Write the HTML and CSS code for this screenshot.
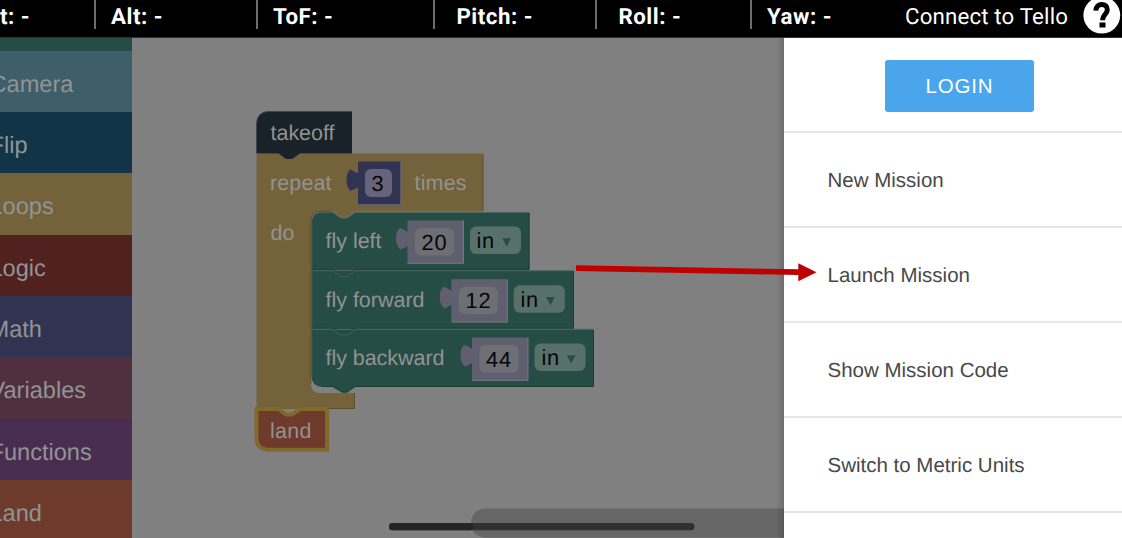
FILE: index.html
```html
<!DOCTYPE html>
<html lang="en">
<head>
<meta charset="utf-8">
<title>Mission editor</title>
<link rel="stylesheet" href="styles.css">
</head>
<body>
<div class="app">
  <header class="topbar">
    <div class="stat stat-bat">t: -</div>
    <div class="stat stat-alt">Alt: -</div>
    <div class="stat stat-tof">ToF: -</div>
    <div class="stat stat-pitch">Pitch: -</div>
    <div class="stat stat-roll">Roll: -</div>
    <div class="stat stat-yaw">Yaw: -</div>
    <div class="connect">Connect to Tello</div>
    <svg class="help" width="38" height="37" viewBox="0 0 38 37">
      <circle cx="18.800" cy="15.200" r="18.400" fill="#fff"/>
      <path d="M12.800 10.600C13 6.500 15.500 4.400 18.800 4.400c3.400 0 5.500 2.200 5.500 5.300 0 4.600-4.800 5-4.800 10.500" fill="none" stroke="#000" stroke-width="5"/>
      <rect x="16.500" y="22.500" width="6" height="5" fill="#000"/>
    </svg>
  </header>
  <main class="main">
    <nav class="toolbox">
      <div class="cat fly"></div>
      <div class="cat camera">Camera</div>
      <div class="cat flip">Flip</div>
      <div class="cat loops">Loops</div>
      <div class="cat logic">Logic</div>
      <div class="cat math">Math</div>
      <div class="cat variables">Variables</div>
      <div class="cat functions">Functions</div>
      <div class="cat landing">Land</div>
    </nav>
    <section class="workspace">
      <svg class="canvas" width="652" height="500" viewBox="132 38 652 500">
        <defs>
          <linearGradient id="edge"><stop offset="0" stop-color="#000" stop-opacity="0"/><stop offset="1" stop-color="#000" stop-opacity=".15"/></linearGradient>
        </defs>
        <path class="loop" d="M256.500 153.500H483V211.500H355L347 217H341L333 211.500H320Q311 212 311 221V384Q311 393 320 393H354.500V409H256.500Z"/>
        <path class="loop-edge" d="M483 154V211M354.500 393V408.500H329M310.800 384V221Q311 211.500 320 211.300H332"/>
        <path class="takeoff" d="M256.500 153.500V124Q257 111.500 269 111.500H352V153.500H300L292 159H286L278.500 153.500Z"/>
        <path class="takeoff-edge" d="M256.500 153V124Q257 111.500 269 111.500H352"/>

        <path class="move" d="M311.500 270.500V222Q312 212.500 321 212.500H333L341 218H347L355 212.500H529.500V270.500Z"/>
        <path class="move" d="M311.500 271H574V329H311.500Z"/>
        <path class="move" d="M311.500 329.500H594V387H355L347 392.500H342L333 387H322Q311.500 386 311.500 376Z"/>
        <path class="move-dark" d="M312 269.700H333L341 275.200H347L355 269.700H529V213M312 328.200H333L341 333.700H347L355 328.200H573.500V271M322 386.500H333L342 392H347L355 386.500H593.500V330"/>
        <path class="move-light" d="M311.700 269V222Q312 212.700 321 212.500H333L341 218H347L355 212.500H529M312 270.700H333L341 276.200H347L355 270.700H573M312 329.200H333L341 334.700H347L355 329.200H593M311.700 272V328M311.700 331V376"/>

        <path class="num-math" d="M358 161.500H400.500V204.500H358V187.500L350.500 191Q346.500 187 346.500 180Q346.500 172 350.500 169.500L358 173.500Z"/>
        <path class="math-edge" d="M358 204.500H400.500V162"/>
        <rect class="field-math" x="365" y="169" width="27" height="28" rx="6"/>

        <g id="slot-left">
          <path class="num" d="M407.500 220.500H463.500V263.500H407.500V246L401 249.500Q396 247 396 238Q396 229 401 228L407.500 232Z"/>
          <path class="num-edge" d="M407.500 263.300H463.500V220.500"/>
          <rect class="field" x="415" y="228" width="39" height="27.500" rx="6"/>
          <rect class="drop" x="470" y="226.500" width="51" height="27.500" rx="6"/>
          <path class="tri" d="M502.300 238.300H511L506.700 246.500Z"/>
        </g>
        <use href="#slot-left" x="43.800" y="58.700"/>
        <use href="#slot-left" x="64.500" y="117"/>

        <path class="land" d="M256.500 409H278.500L286 414.500H292L300 409H327V449.800H268Q256.500 449 256.500 438Z"/>

        <g class="label">
          <text x="270.500" y="140" textLength="64">takeoff</text>
          <text x="270" y="190" textLength="61.500">repeat</text>
          <text x="414.500" y="190" textLength="52">times</text>
          <text x="270.500" y="239.500" textLength="24">do</text>
          <text x="325.500" y="248" textLength="56">fly left</text>
          <text x="325.500" y="306.500" textLength="99">fly forward</text>
          <text x="325.500" y="365" textLength="119">fly backward</text>
          <text x="270" y="438" textLength="41.500">land</text>
        </g>
        <g class="value">
          <text x="371.500" y="191">3</text>
          <text x="421.500" y="249.500" textLength="25">20</text>
          <text x="465.500" y="308" textLength="25">12</text>
          <text x="486" y="366.500" textLength="25">44</text>
          <text x="476.500" y="248" textLength="17.500">in</text>
          <text x="520.500" y="306.500" textLength="17.500">in</text>
          <text x="541.500" y="365" textLength="17.500">in</text>
        </g>

        <path d="M784 508.500H485Q471 510 471 523.500Q471 536 485 537.500H784Z" fill="#666"/>
        <rect x="389" y="523" width="305.500" height="7.300" rx="3.600" fill="#303030"/>
        <rect x="389" y="523" width="84" height="7.300" rx="3.600" fill="#252525"/>
        <rect x="776" y="38" width="8" height="500" fill="url(#edge)"/>
      </svg>
    </section>
    <aside class="drawer">
      <div class="login-row"><button class="login">LOGIN</button></div>
      <a class="item">New Mission</a>
      <a class="item">Launch Mission</a>
      <a class="item">Show Mission Code</a>
      <a class="item">Switch to Metric Units</a>
      <div class="item"></div>
    </aside>
  </main>
  <svg class="arrow" width="242" height="22" viewBox="575 262 242 22">
    <path d="M576 265.200L798.300 269.300V263.300L816.500 272.300L798.300 281.300V275L576 271Z" fill="#c00000"/>
  </svg>
</div>
</body>
</html>
```
FILE: styles.css
```css
* { box-sizing: border-box; }
body { margin: 0; font-family: "Liberation Sans", Arial, sans-serif; }
.app { position: relative; width: 1122px; height: 538px; overflow: hidden; display: flex; flex-direction: column; background: #808080; text-rendering: geometricPrecision; }

.topbar { display: flex; flex: none; height: 38px; background: #000; border-bottom: 1px solid #303030; color: #fff; font-family: Roboto, sans-serif; font-size: 22.3px; }
.stat { flex: none; height: 29px; line-height: 34px; font-weight: 700; white-space: nowrap; letter-spacing: .5px; border-left: 2px solid #6c6c6c; }
.stat-bat { width: 94px; border-left: 0; }
.stat-alt { width: 162px; padding-left: 15px; }
.stat-tof { width: 177px; padding-left: 15px; }
.stat-pitch { width: 162px; padding-left: 21.5px; }
.stat-roll { width: 155px; padding-left: 21.5px; }
.stat-yaw { width: 155px; padding-left: 15px; }
.connect { flex: none; width: 177.5px; line-height: 34px; height: 34px; white-space: nowrap; letter-spacing: .15px; }
.help { flex: none; display: block; }

.main { display: flex; flex: 1; min-height: 0; }
.toolbox { flex: none; width: 132px; overflow: hidden; color: #919494; font-size: 23.6px; }
.cat { height: 61.4px; line-height: 69px; text-indent: -10.5px; white-space: nowrap; }
.fly { height: 12.500px; background: #264d45; }
.camera { background: #3e5e69; }
.flip { background: #123448; }
.loops { background: #73623a; }
.logic { background: #50211f; }
.math { background: #303352; }
.variables { background: #50303f; }
.functions { background: #492d51; }
.landing { background: #6d3a2c; }

.workspace { flex: none; width: 652px; }
.canvas { display: block; }
.loop { fill: #73623a; }
.loop-edge { fill: none; stroke: #5d4e2c; }
.takeoff { fill: #182228; }
.takeoff-edge { fill: none; stroke: #38474b; }
.move { fill: #264d45; }
.move-dark { fill: none; stroke: #193d35; }
.move-light { fill: none; stroke: #48655f; }
.num-math { fill: #303352; }
.math-edge { fill: none; stroke: #5a5c75; }
.field-math { fill: #65647a; }
.num { fill: #605f70; }
.num-edge { fill: none; stroke: #777685; }
.field { fill: #6e6e75; }
.drop { fill: #58706a; }
.tri { fill: #264d45; }
.land { fill: #6d3a2c; stroke: #80692a; stroke-width: 4px; }
.label { fill: #929292; font-size: 21.5px; }
.value { fill: #050505; font-size: 21.8px; }

.drawer { flex: none; width: 338px; background: #fff; }
.login-row { height: 95px; display: flex; align-items: flex-start; padding: 22px 0 0 101px; border-bottom: 2px solid #e6e6e6; }
.login { width: 149px; height: 52px; padding: 0; border: 0; border-radius: 3px; background: #4ba5ec; color: #fff; font: 20.5px "Liberation Sans", Arial, sans-serif; letter-spacing: .8px; }
.item { display: flex; align-items: center; height: 95px; padding: 3px 0 0 43.500px; border-bottom: 2px solid #e6e6e6; color: #484848; font-size: 20.5px; }
.arrow { position: absolute; left: 575px; top: 262px; }
```
